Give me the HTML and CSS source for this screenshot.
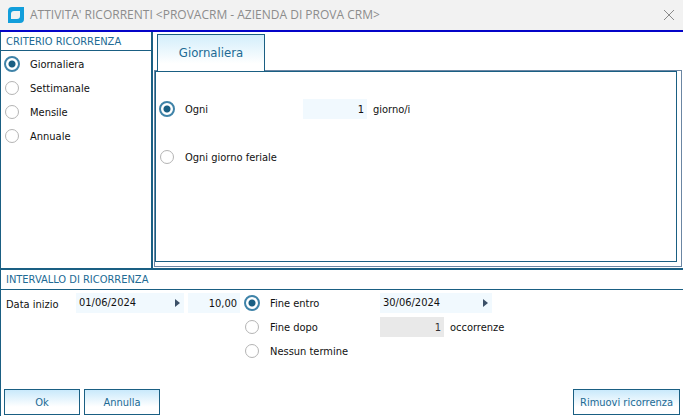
FILE: index.html
```html
<!DOCTYPE html>
<html lang="it">
<head>
    <meta charset="UTF-8">
    <meta name="viewport" content="width=device-width, initial-scale=1.0">
    <title>Attivita' ricorrenti</title>
    <link rel="stylesheet" href="styles.css">
</head>
<body>

    <header class="titlebar">
        <svg class="logo" width="16" height="16" viewBox="0 0 16 16">
            <path fill="#129edb" fill-rule="evenodd" d="M4 0H16V12Q16 16 12 16H0V4Q0 0 4 0ZM6 4Q3 4 3 7V12H9Q12 12 12 9V4Z"/>
        </svg>
        <h1 class="title">ATTIVITA' RICORRENTI &lt;PROVACRM - AZIENDA DI PROVA CRM&gt;</h1>
        <button class="close" type="button" aria-label="Chiudi">
            <svg width="10" height="10" viewBox="0 0 10 10">
                <path d="M0 0L10 10M10 0L0 10" stroke="#8a8a8a" fill="none"/>
            </svg>
        </button>
    </header>

    <form class="content">
        <div class="top">
            <section class="criterio">
                <h2 class="heading">CRITERIO RICORRENZA</h2>
                <div class="options">
                    <label class="option"><input type="radio" name="criterio" checked><span>Giornaliera</span></label>
                    <label class="option"><input type="radio" name="criterio"><span>Settimanale</span></label>
                    <label class="option"><input type="radio" name="criterio"><span>Mensile</span></label>
                    <label class="option"><input type="radio" name="criterio"><span>Annuale</span></label>
                </div>
            </section>

            <section class="detail">
                <button class="tab" type="button">Giornaliera</button>
                <div class="panel">
                    <div class="panel-inner">
                        <div class="daily">
                            <label class="option"><input type="radio" name="giorni" checked><span>Ogni</span></label>
                            <input class="field number" type="text" value="1" aria-label="Numero giorni">
                            <span class="unit">giorno/i</span>
                        </div>
                        <label class="option"><input type="radio" name="giorni"><span>Ogni giorno feriale</span></label>
                    </div>
                </div>
            </section>
        </div>

        <section class="interval">
            <h2 class="heading">INTERVALLO DI RICORRENZA</h2>
            <div class="range">
                <label class="start" for="inizio">Data inizio</label>
                <div class="field date">
                    <input id="inizio" type="text" value="01/06/2024">
                    <button class="arrow" type="button" aria-label="Scegli data inizio"></button>
                </div>
                <input class="field number" type="text" value="10,00" aria-label="Ora inizio">
                <div class="ends">
                    <label class="option"><input type="radio" name="fine" checked><span>Fine entro</span></label>
                    <label class="option"><input type="radio" name="fine"><span>Fine dopo</span></label>
                    <label class="option"><input type="radio" name="fine"><span>Nessun termine</span></label>
                </div>
                <div class="limits">
                    <div class="field date">
                        <input type="text" value="30/06/2024" aria-label="Data fine">
                        <button class="arrow" type="button" aria-label="Scegli data fine"></button>
                    </div>
                    <div class="count">
                        <input class="field number" type="text" value="1" aria-label="Numero occorrenze" disabled>
                        <span class="unit">occorrenze</span>
                    </div>
                </div>
            </div>
        </section>

        <footer class="actions">
            <button class="btn" type="button">Ok</button>
            <button class="btn" type="button">Annulla</button>
            <button class="btn btn-remove" type="button">Rimuovi ricorrenza</button>
        </footer>
    </form>

</body>
</html>
```
FILE: styles.css
```css
* {
    box-sizing: border-box;
}

body {
    display: flex;
    flex-direction: column;
    min-height: 100vh;
    margin: 0;
    background: #fff;
    color: #111;
    font: 11px/16px "DejaVu Sans Condensed", "DejaVu Sans", sans-serif;
    font-stretch: condensed;
}

input,
button {
    margin: 0;
    padding: 0;
    border: 0;
    background: none;
    color: inherit;
    font: inherit;
}

/* title bar */
.titlebar {
    display: flex;
    align-items: center;
    gap: 6px;
    height: 32px;
    padding: 0 8px;
    background: #f2f2f2;
    border-bottom: 2px solid #0404c8;
}

.title {
    flex: 1;
    margin: 0;
    color: #8c8c8c;
    font: 12px/16px "Open Sans", sans-serif;
}

.close {
    display: flex;
    padding: 1px;
}

/* sections */
.content {
    flex: 1;
    display: flex;
    flex-direction: column;
    border-left: 1px solid #1a5f83;
}

.top {
    display: flex;
    min-height: 238px;
    border-bottom: 2px solid #1a5f83;
}

.criterio {
    width: 152px;
    border-right: 2px solid #1a5f83;
}

.heading {
    height: 19px;
    margin: 0;
    padding: 2px 5px 0;
    border-bottom: 1px solid #1a5f83;
    color: #216a94;
    font-size: 11px;
    font-weight: normal;
    line-height: 16px;
}

.options {
    padding: 1px 3px;
}

.option {
    display: flex;
    align-items: center;
    gap: 10px;
    height: 24px;
}

.option span,
.unit,
.start {
    padding-top: 2px;
}

input[type="radio"] {
    appearance: none;
    width: 16px;
    height: 16px;
    border: 1px solid #b4b4b4;
    border-radius: 50%;
    background: #fff;
}

input[type="radio"]:not(:checked) {
    width: 14px;
    height: 14px;
    margin: 1px;
}

input[type="radio"]:checked {
    border: 2px solid #3f83a8;
    background: radial-gradient(circle, #1a5f83 3px, #fff 4px);
}

/* tab and its panel */
.detail {
    flex: 1;
    display: flex;
    flex-direction: column;
    align-items: flex-start;
    padding: 2px 1px 1px;
}

.tab {
    z-index: 1;
    width: 108px;
    height: 37px;
    margin-left: 3px;
    border: 1px solid #1a5f83;
    border-bottom: 0;
    background: linear-gradient(#d3eefb, #fff 80%);
    color: #216a94;
    font-size: 13px;
}

.panel {
    flex: 1;
    display: flex;
    align-self: stretch;
    margin-top: -1px;
    padding: 0 4px 4px 0;
    border: 1px solid #6b86a3;
}

.panel-inner {
    flex: 1;
    display: flex;
    flex-direction: column;
    gap: 24px;
    padding: 25px 3px;
    border: 1px solid #1a5f83;
}

.daily {
    display: flex;
    align-items: center;
}

.daily .option {
    width: 144px;
}

/* fields */
.field {
    height: 20px;
    background: #f1f9fe;
}

.number {
    width: 64px;
    padding-right: 3px;
    text-align: right;
}

.number:disabled {
    background: #e9e9e9;
    color: #333;
}

.unit {
    margin-left: 6px;
}

.date {
    display: flex;
    align-items: center;
    width: 112px;
    padding: 0 4px 0 3px;
}

.date input {
    flex: 1;
    min-width: 0;
}

.arrow {
    border: 4px solid transparent;
    border-left: 5px solid #3c5068;
    border-right: 0;
}

/* interval */
.range {
    display: flex;
    align-items: flex-start;
    padding: 1px 5px;
}

.interval .heading {
    height: 20px;
}

.start {
    width: 70px;
    line-height: 24px;
}

.range .field {
    margin-top: 2px;
}

.range > .date {
    width: 108px;
}

.range > .number {
    width: 52px;
    margin-left: 4px;
}

.ends {
    width: 136px;
    margin-left: 4px;
}

.limits .date {
    margin-bottom: 2px;
}

.count {
    display: flex;
    align-items: center;
    height: 24px;
}

.count .field {
    margin-top: 0;
}

/* buttons */
.actions {
    display: flex;
    gap: 4px;
    margin-top: auto;
    padding: 0 3px 1px;
}

.btn {
    min-width: 76px;
    height: 26px;
    padding: 1px 6px 0;
    border: 1px solid #1a5f83;
    background: linear-gradient(#c9e9fb, #fff 70%);
    color: #216a94;
}

.btn-remove {
    margin-left: auto;
}
```
